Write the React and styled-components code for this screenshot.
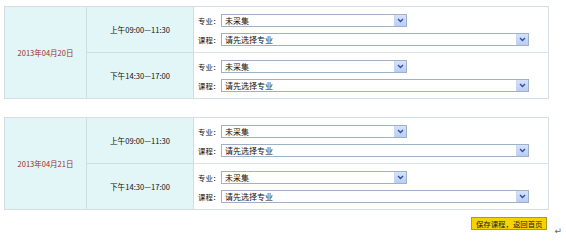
import React from 'react';
import styled, { createGlobalStyle } from 'styled-components';

const GlobalStyle = createGlobalStyle`
  body {
    margin: 0;
    background: #fff;
    font-family: "Noto Sans CJK SC", "Liberation Sans", sans-serif;
  }
`;

const Page = styled.div`
  width: 566px;
  padding: 6px 0 0 4px;
  box-sizing: border-box;
  display: flex;
  flex-direction: column;
  gap: 18px;
`;

const Block = styled.div`
  display: grid;
  grid-template-columns: 82px 107px 1fr;
  grid-template-rows: 46px 45px;
  width: 545px;
  border: 1px solid #d6dee1;
  box-sizing: border-box;
`;

const DateCell = styled.div`
  grid-row: span 2;
  background: #e2f5f7;
  border-right: 1px solid #cfdde1;
  display: flex;
  align-items: center;
  justify-content: center;
  color: #9b2c2c;
  font-size: 7.5px;
`;

const TimeCell = styled.div`
  background: #e2f5f7;
  border-right: 1px solid #cfdde1;
  border-bottom: ${p => (p.$first ? '1px solid #cfdde1' : 'none')};
  display: flex;
  align-items: center;
  justify-content: center;
  color: #111;
  font-size: 7.6px;
`;

const FieldCell = styled.div`
  background: #fff;
  border-bottom: ${p => (p.$first ? '1px solid #dde3e5' : 'none')};
  padding: 7px 0 0 4px;
  display: flex;
  flex-direction: column;
  gap: 6px;
`;

const FieldRow = styled.div`
  display: flex;
  align-items: center;
`;

const Label = styled.span`
  width: 23px;
  font-size: 7.4px;
  color: #111;
  white-space: nowrap;
`;

const Select = styled.div`
  display: flex;
  align-items: stretch;
  width: ${p => p.$w}px;
  height: 13px;
  border: 1px solid #9fb1c6;
  box-sizing: border-box;
  background: #fff;
`;

const SelectText = styled.span`
  flex: 1;
  padding-left: 3px;
  font-size: 8px;
  line-height: 11px;
  color: #111;
  white-space: nowrap;
`;

const Arrow = styled.span`
  width: 11px;
  background: linear-gradient(#d6e2fb, #b9cdf5);
  border-left: 1px solid #c9d6ef;
  display: flex;
  align-items: center;
  justify-content: center;
`;

const Footer = styled.div`
  display: flex;
  align-items: flex-start;
  justify-content: flex-end;
  width: 558px;
  margin-top: -11px;
`;

const SaveButton = styled.button`
  height: 13px;
  padding: 0 4px;
  background: #f6d200;
  border: 1px solid #a99a2a;
  font-family: "Noto Sans CJK SC", sans-serif;
  font-size: 7.4px;
  line-height: 11px;
  color: #222;
  cursor: pointer;
`;

const ReturnMark = styled.span`
  margin-left: 7px;
  margin-top: 10px;
  font-family: "DejaVu Sans", sans-serif;
  font-size: 9px;
  line-height: 9px;
  color: #666;
`;

const Chevron = () => (
  <svg width="7" height="5" viewBox="0 0 7 5">
    <path d="M1 1 L3.5 3.5 L6 1" fill="none" stroke="#2f4f9a" strokeWidth="1.4" />
  </svg>
);

const Dropdown = ({ w, text }) => (
  <Select $w={w}>
    <SelectText>{text}</SelectText>
    <Arrow>
      <Chevron />
    </Arrow>
  </Select>
);

const Session = ({ first }) => (
  <FieldCell $first={first}>
    <FieldRow>
      <Label>专业：</Label>
      <Dropdown w={186} text="未采集" />
    </FieldRow>
    <FieldRow>
      <Label>课程：</Label>
      <Dropdown w={308} text="请先选择专业" />
    </FieldRow>
  </FieldCell>
);

const DayBlock = ({ date }) => (
  <Block>
    <DateCell>{date}</DateCell>
    <TimeCell $first>上午09:00—11:30</TimeCell>
    <Session first />
    <TimeCell>下午14:30—17:00</TimeCell>
    <Session />
  </Block>
);

export default function App() {
  return (
    <>
      <GlobalStyle />
      <Page>
        <DayBlock date="2013年04月20日" />
        <DayBlock date="2013年04月21日" />
        <Footer>
          <SaveButton>保存课程，返回首页</SaveButton>
          <ReturnMark>↵</ReturnMark>
        </Footer>
      </Page>
    </>
  );
}
